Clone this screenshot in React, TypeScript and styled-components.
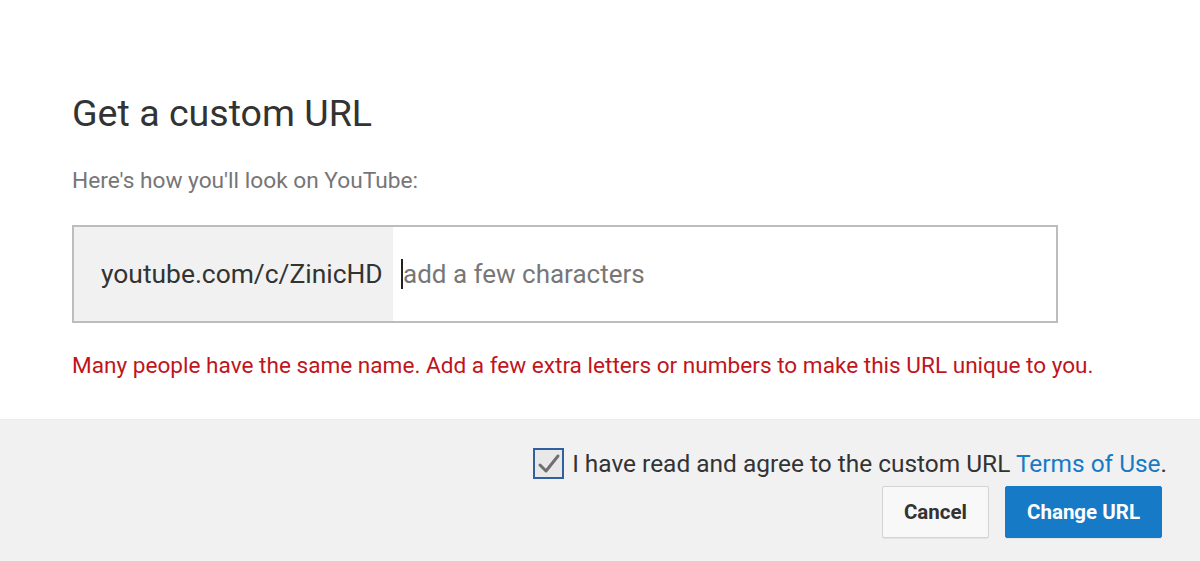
import React from "react";
import styled, { createGlobalStyle } from "styled-components";

const Global = createGlobalStyle`
  html, body { margin: 0; padding: 0; background: #fff; }
  body { font-family: Roboto, "Noto Sans", Arial, sans-serif; }
  * { box-sizing: border-box; }
`;

const Dialog = styled.div`
  width: 1200px;
  height: 561px;
  display: flex;
  flex-direction: column;
  background: #fff;
  overflow: hidden;
`;

const Body = styled.div`
  padding: 91px 0 0 72px;
  display: flex;
  flex-direction: column;
  height: 419px;
  flex: none;
`;

const Title = styled.h1`
  margin: 0;
  font-size: 37.6px;
  font-weight: 400;
  line-height: 44px;
  color: #333;
`;

const Subtitle = styled.p`
  margin: 32px 0 0;
  font-size: 22.7px;
  line-height: 28px;
  color: #767676;
`;

const Field = styled.div`
  margin-top: 30px;
  width: 986px;
  height: 98px;
  border: 2px solid #bdbdbd;
  display: flex;
  align-items: stretch;
`;

const Prefix = styled.div`
  width: 319px;
  background: #f1f1f1;
  display: flex;
  align-items: center;
  padding-left: 27px;
  font-size: 26.4px;
  color: #333;
  white-space: nowrap;
`;

const Entry = styled.div`
  flex: 1;
  display: flex;
  align-items: center;
  padding-left: 8px;
  font-size: 26px;
  color: #777;
  white-space: nowrap;
`;

const Caret = styled.span`
  display: inline-block;
  width: 2px;
  height: 30px;
  background: #222;
`;

const ErrorText = styled.p`
  margin: 29px 0 0;
  font-size: 22.6px;
  line-height: 28px;
  color: #c0151c;
  white-space: nowrap;
`;

const Footer = styled.div`
  flex: 1;
  background: #f1f1f1;
  border-top: 1px solid #ececec;
  display: flex;
  flex-direction: column;
  align-items: flex-end;
  padding: 28px 33px 0 0;
`;

const Agree = styled.label`
  display: flex;
  align-items: center;
  gap: 8px;
  font-size: 24.45px;
  line-height: 30px;
  color: #333;
  white-space: nowrap;
`;

const Box = styled.span`
  width: 31px;
  height: 31px;
  border: 2px solid #31609e;
  background: #e8e8e8;
  display: flex;
  align-items: center;
  justify-content: center;
`;

const Link = styled.a`
  color: #167ac6;
  text-decoration: none;
`;

const Buttons = styled.div`
  display: flex;
  gap: 16px;
  margin-top: 7px;
  margin-right: 5px;
`;

const Button = styled.button<{ $primary?: boolean }>`
  height: 52px;
  padding: 0 21px;
  border-radius: 2px;
  font-family: Roboto, Arial, sans-serif;
  font-size: 20.5px;
  font-weight: 700;
  cursor: pointer;
  border: 1px solid ${(p) => (p.$primary ? "#167ac6" : "#d3d3d3")};
  background: ${(p) => (p.$primary ? "#167ac6" : "#f8f8f8")};
  color: ${(p) => (p.$primary ? "#fff" : "#333")};
  box-shadow: 0 1px 0 rgba(0, 0, 0, 0.05);
`;

export default function App() {
  return (
    <Dialog>
      <Global />
      <Body>
        <Title>Get a custom URL</Title>
        <Subtitle>Here's how you'll look on YouTube:</Subtitle>
        <Field>
          <Prefix>youtube.com/c/ZinicHD</Prefix>
          <Entry>
            <Caret />
            add a few characters
          </Entry>
        </Field>
        <ErrorText>
          Many people have the same name. Add a few extra letters or numbers to make this URL unique to you.
        </ErrorText>
      </Body>
      <Footer>
        <Agree>
          <Box>
            <svg width="24" height="22" viewBox="0 0 24 22">
              <path d="M3 12 L9 18 L21 3" fill="none" stroke="#6f6f6f" strokeWidth="3" strokeLinecap="round" strokeLinejoin="round" />
            </svg>
          </Box>
          <span>
            I have read and agree to the custom URL <Link href="#">Terms of Use</Link>.
          </span>
        </Agree>
        <Buttons>
          <Button>Cancel</Button>
          <Button $primary>Change URL</Button>
        </Buttons>
      </Footer>
    </Dialog>
  );
}
